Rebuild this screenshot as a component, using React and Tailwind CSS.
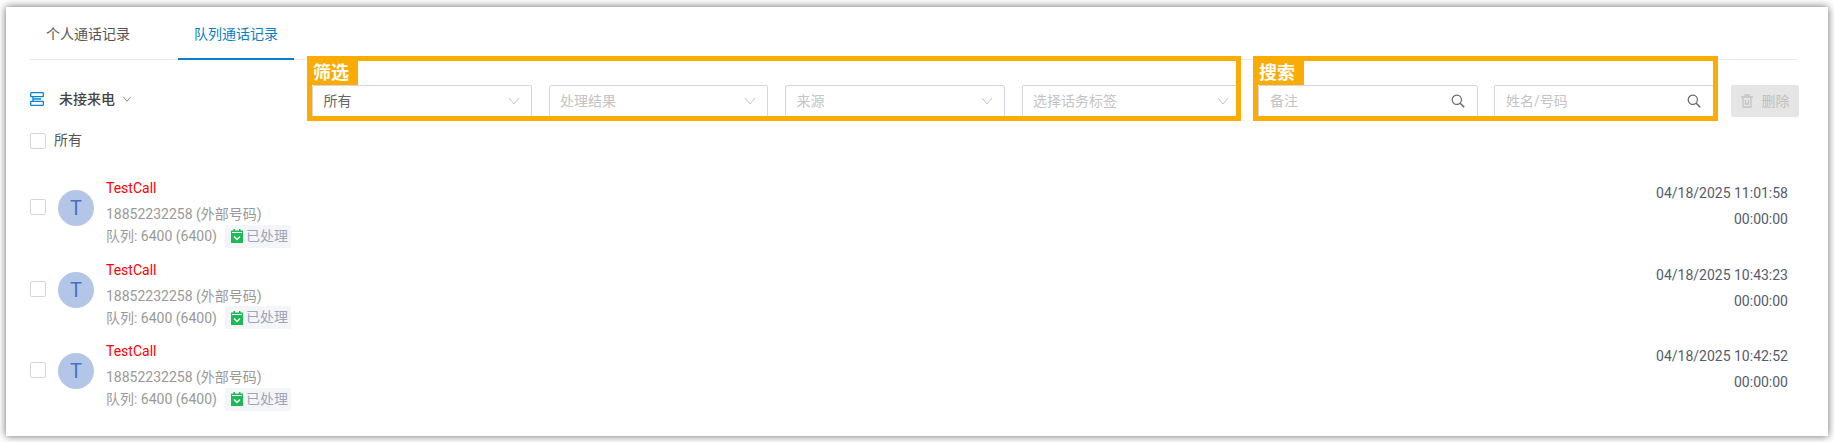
import React from 'react';

const font = "font-['Roboto','Noto_Sans_CJK_SC',sans-serif]";

const records = [
  { time: '04/18/2025 11:01:58' },
  { time: '04/18/2025 10:43:23' },
  { time: '04/18/2025 10:42:52' },
];

const Chevron = ({ className }) => (
  <svg viewBox="0 0 12 8" fill="none" stroke="currentColor" strokeWidth="1" className={className}>
    <path d="M1 1l5 6 5-6" />
  </svg>
);

const SearchIcon = () => (
  <svg viewBox="0 0 14 14" fill="none" stroke="#666" strokeWidth="1.2" className="w-[14px] h-[14px] shrink-0">
    <circle cx="5.8" cy="5.8" r="4.6" />
    <path d="M9.2 9.2l4 4" strokeWidth="1.5" />
  </svg>
);

const Select = ({ label, active }) => (
  <div className="w-[219.5px] h-8 shrink-0 bg-white border border-[#d5d5e0] rounded-[2px] flex items-center justify-between pl-[10.5px] pr-[11px]">
    <span className={active ? 'text-[#666]' : 'text-[#c4c4c4]'}>{label}</span>
    <Chevron className="w-3 h-2 text-[#c4c4c4]" />
  </div>
);

const SearchInput = ({ label }) => (
  <div className="w-[220px] h-8 shrink-0 bg-white border border-[#d5d5e0] rounded-[2px] flex items-center justify-between pl-[11px] pr-3">
    <span className="text-[#c4c4c4]">{label}</span>
    <SearchIcon />
  </div>
);

const Frame = ({ title, className, children }) => (
  <div className={`border-[5px] border-[#faac05] h-[65px] overflow-hidden shrink-0 ${className}`}>
    <div className="w-[46px] h-[24px] bg-[#faac05] text-white font-bold text-[18px] leading-[24px] pl-[1px]">{title}</div>
    <div className="flex">{children}</div>
  </div>
);

const Record = ({ time }) => (
  <div className="flex h-[81.5px]">
    <div className="w-4 h-4 mt-[13px] border border-[#d5d5e0] rounded-[2px]" />
    <div className="w-9 h-9 mt-[4px] ml-3 rounded-full bg-[#b4c6e7] text-[#4472c4] text-[20px] flex items-center justify-center">T</div>
    <div className="ml-3">
      <div className="text-[#ff0000] leading-5 -mt-[8px]">TestCall</div>
      <div className="text-[#999] leading-5 mt-[6px]">18852232258 (外部号码)</div>
      <div className="flex items-center text-[#999]">
        <span className="leading-6">队列: 6400 (6400)</span>
        <span className="ml-2 h-[23px] w-[66px] bg-[#f4f5f8] rounded-[2px] flex items-center pl-[6px]">
          <svg viewBox="0 0 12 14" className="w-3 h-[14px] shrink-0">
            <rect x="0" y="1.5" width="12" height="12.5" rx="0.5" fill="#1db954" />
            <rect x="2.5" y="0" width="1.5" height="3" fill="#1db954" />
            <rect x="8" y="0" width="1.5" height="3" fill="#1db954" />
            <rect x="1" y="3" width="10" height="1" fill="#fff" />
            <path d="M3 7.5l3 3 3-3" fill="none" stroke="#fff" strokeWidth="1.3" />
          </svg>
          <span className="ml-[3px] text-[#a0a4b8]">已处理</span>
        </span>
      </div>
    </div>
    <div className="ml-auto mr-[9px] text-right text-[#555b6e] -mt-[3px]">
      <div className="leading-5">{time}</div>
      <div className="leading-5 mt-[6px]">00:00:00</div>
    </div>
  </div>
);

export default function App() {
  return (
    <div className={`h-[442px] bg-white pl-[6px] pr-[6px] pt-[7px] overflow-hidden text-[14px] ${font}`}>
      <div className="h-[429px] bg-white shadow-[0_0_8px_rgba(0,0,0,0.6)] pl-6 pr-[31px]">
        {/* tabs */}
        <div className="flex h-[53px] border-b border-[#e8eaee]">
          <div className="w-[148px] pl-4 pt-[17px] text-[#555] leading-5">个人通话记录</div>
          <div className="w-[116px] h-[53px] pl-4 pt-[17px] text-[#0a7fc9] leading-5 border-b-2 border-[#0a7fc9]">队列通话记录</div>
        </div>

        <div className="flex -mt-[4px] relative">
          <div className="w-[277px] shrink-0">
            <div className="flex items-center h-5 mt-[33px]">
              <svg viewBox="0 0 14 14" fill="none" stroke="#0a84d0" strokeWidth="1.3" className="w-[14px] h-[14px]">
                <rect x="0.7" y="0.7" width="12.6" height="4" rx="0.5" />
                <rect x="0.7" y="9.3" width="12.6" height="4" rx="0.5" />
                <path d="M3 4.7v4.6M3 7h8" />
              </svg>
              <span className="ml-[15px] font-medium text-[#444]">未接来电</span>
              <Chevron className="ml-[7px] w-[10px] h-[6px] text-[#666]" />
            </div>
            <div className="flex items-center mt-[21px]">
              <div className="w-4 h-4 border border-[#d5d5e0] rounded-[2px]" />
              <span className="ml-2 text-[#555]">所有</span>
            </div>
          </div>

          <Frame title="筛选" className="w-[934px]">
            <div className="flex gap-[17px] w-[950px]">
              <Select label="所有" active />
              <Select label="处理结果" />
              <Select label="来源" />
              <Select label="选择话务标签" />
            </div>
          </Frame>

          <Frame title="搜索" className="w-[465px] ml-3">
            <div className="flex gap-4">
              <SearchInput label="备注" />
              <SearchInput label="姓名/号码" />
            </div>
          </Frame>

          <div className="ml-[13px] mt-[29px] w-[68px] h-8 bg-[#e5e5e5] rounded-[2px] flex items-center justify-center gap-[9px] text-[#bfbfbf] shrink-0">
            <svg viewBox="0 0 12 14" fill="none" stroke="#c4c4c4" strokeWidth="1.3" className="w-3 h-[14px]">
              <path d="M0 3h12M4 3V1h4v2M2 3v10h8V3M4.5 6v4h3V6" />
            </svg>
            <span>删除</span>
          </div>
        </div>

        {/* records */}
        <div className="mt-[35px]">
          {records.map((r) => (
            <Record key={r.time} time={r.time} />
          ))}
        </div>
      </div>
    </div>
  );
}
